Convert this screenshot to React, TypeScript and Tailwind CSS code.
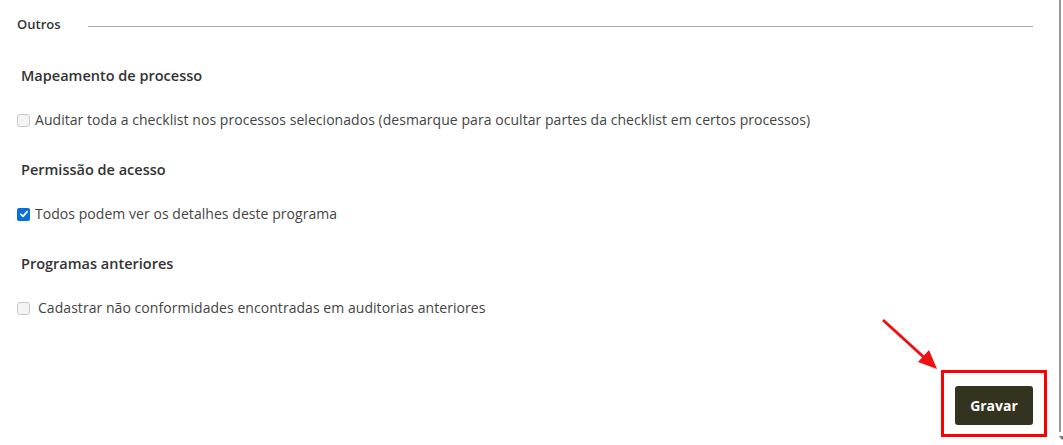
const font = { fontFamily: '"Open Sans", "Noto Sans", Arial, sans-serif' };

const Check = ({ checked }: { checked?: boolean }) =>
  checked ? (
    <span className="flex h-[13px] w-[13px] shrink-0 items-center justify-center rounded-[2px] bg-[#0b6fd8]">
      <svg viewBox="0 0 12 12" className="h-[10px] w-[10px]">
        <path d="M2.2 6.3 L4.9 8.9 L9.8 3.2" fill="none" stroke="#fff" strokeWidth="2" strokeLinecap="round" strokeLinejoin="round" />
      </svg>
    </span>
  ) : (
    <span className="h-[13px] w-[13px] shrink-0 rounded-[3px] border border-[#c8c8c8] bg-[#f4f4f4]" />
  );

const Section = ({ title, label, checked, gap = "gap-[5px]" }: { title: string; label: string; checked?: boolean; gap?: string }) => (
  <div>
    <h3 className="pl-[21px] text-[14.5px] font-semibold leading-[20px] text-[#333]">{title}</h3>
    <div className={`mt-[24px] flex items-center pl-[17px] ${gap}`}>
      <Check checked={checked} />
      <span className="text-[14px] leading-[20px] tracking-[0.05px] text-[#444]">{label}</span>
    </div>
  </div>
);

export default function App() {
  return (
    <div className="relative flex h-[445px] w-[1063px] overflow-hidden bg-white" style={font}>
      <div className="flex flex-1 flex-col">
        {/* Outros header */}
        <div className="mt-[16px] flex items-center">
          <span className="pl-[17px] text-[13px] font-semibold leading-[16px] text-[#333]">Outros</span>
          <div className="ml-[27px] mr-[26px] mt-[4px] h-px flex-1 bg-[#aaa]" />
        </div>

        <div className="mt-[34px] flex flex-col gap-[30px]">
          <Section
            title="Mapeamento de processo"
            label="Auditar toda a checklist nos processos selecionados (desmarque para ocultar partes da checklist em certos processos)"
          />
          <Section title="Permissão de acesso" label="Todos podem ver os detalhes deste programa" checked />
          <Section
            title="Programas anteriores"
            label="Cadastrar não conformidades encontradas em auditorias anteriores"
            gap="gap-[8px]"
          />
        </div>

        {/* Save */}
        <div className="mt-auto mb-[8px] flex justify-end pr-[12px]">
          <div className="border-[3px] border-[#ff0000] px-[11px] pt-[13px] pb-[9px]">
            <button className="h-[39px] w-[78px] rounded-[3px] bg-[#33331f] text-[14px] font-bold text-white">Gravar</button>
          </div>
        </div>
      </div>

      {/* scrollbar edge */}
      <div className="flex w-[4px] flex-col items-start">
        <div className="h-[432px] w-[2px] bg-[#999]" />
        <div className="mt-[4px] h-0 w-0 border-x-[3px] border-t-[4px] border-x-transparent border-t-[#777]" />
      </div>

      {/* annotation arrow */}
      <svg className="pointer-events-none absolute left-0 top-0" width="1063" height="445">
        <line x1="883" y1="320" x2="928" y2="361" stroke="#ee1111" strokeWidth="3" />
        <polygon points="937,369 918,362 929,350" fill="#ee1111" />
      </svg>
    </div>
  );
}
